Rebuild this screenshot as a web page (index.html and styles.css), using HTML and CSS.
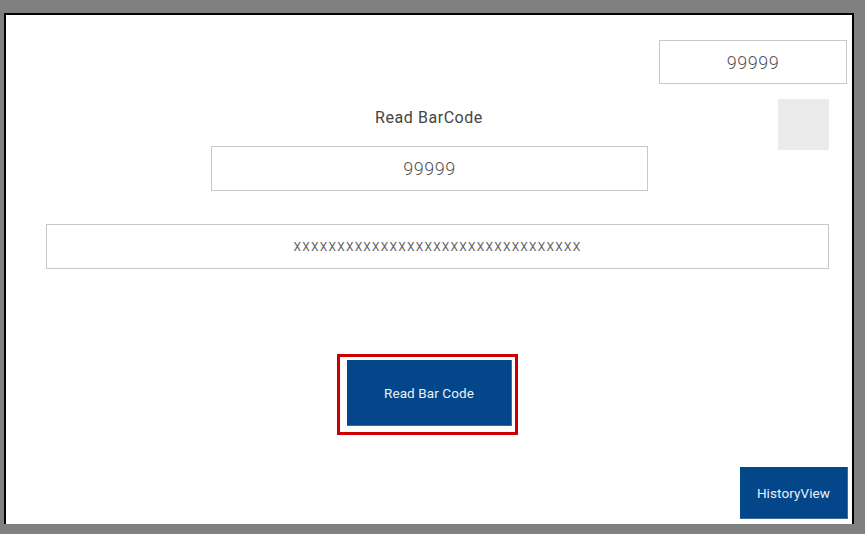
FILE: index.html
```html
<!DOCTYPE html>
<html>
<head>
<meta charset="utf-8">
<link rel="stylesheet" href="styles.css">
</head>
<body>
<div class="panel">
  <div class="top-row">
    <div class="field field-small">99999</div>
  </div>
  <div class="mid-grid">
    <div class="label">Read BarCode</div>
    <div class="square"></div>
    <div class="field field-mid">99999</div>
  </div>
  <div class="field field-wide">XXXXXXXXXXXXXXXXXXXXXXXXXXXXXXXXX</div>
  <div class="focus-ring">
    <button class="btn btn-read">Read Bar Code</button>
  </div>
  <button class="btn btn-history">HistoryView</button>
</div>
</body>
</html>
```
FILE: styles.css
```css
html, body {
  margin: 0;
  padding: 0;
  background: #808080;
  width: 865px;
  height: 534px;
  overflow: hidden;
}
body {
  font-family: Roboto, "Liberation Sans", sans-serif;
}
.panel {
  margin: 13px 0 0 4px;
  width: 846px;
  height: 509px;
  background: #fff;
  border: 2px solid #000;
  border-bottom: none;
  display: flex;
  flex-direction: column;
}
.top-row {
  display: flex;
  justify-content: flex-end;
  padding: 25px 5px 0 0;
}
.field {
  box-sizing: border-box;
  border: 1px solid #c8c8c8;
  background: #fff;
  color: #555;
  display: flex;
  align-items: center;
  justify-content: center;
  font-weight: 300;
}
.field-small {
  width: 188px;
  height: 44px;
  font-size: 18px;
  letter-spacing: 0.5px;
}
.mid-grid {
  margin-top: 15px;
  display: grid;
  grid-template-columns: 1fr 438px 1fr;
  grid-template-rows: 47px 45px;
}
.label {
  grid-column: 2;
  grid-row: 1;
  text-align: center;
  font-size: 16px;
  letter-spacing: 0.55px;
  color: #444;
  padding-top: 9px;
}
.square {
  grid-column: 3;
  grid-row: 1 / span 2;
  justify-self: end;
  align-self: start;
  width: 51px;
  height: 51px;
  margin-right: 23px;
  background: #ebebeb;
}
.field-mid {
  grid-column: 2;
  grid-row: 2;
  font-size: 18px;
  letter-spacing: 0.5px;
  margin-left: 1px;
}
.field-wide {
  margin: 33px 23px 0 40px;
  height: 45px;
  font-size: 12px;
  letter-spacing: 1.2px;
  color: #666;
  font-weight: 400;
}
.focus-ring {
  align-self: flex-start;
  margin: 85px 0 0 331px;
  border: 3px solid #cc0000;
  padding: 3px 3px 6px 7px;
  display: flex;
}
.btn {
  font-family: Roboto, "Liberation Sans", sans-serif;
  background: #03468a;
  color: #eef1f6;
  border: none;
  border-right: 1px solid #3d6a9c;
  border-bottom: 1px solid #3d6a9c;
  margin: 0;
  padding: 0;
  font-size: 13.5px;
  cursor: pointer;
}
.btn-read {
  width: 165px;
  height: 66px;
  letter-spacing: 0.1px;
}
.btn-history {
  align-self: flex-end;
  margin: 32px 4px 0 0;
  width: 108px;
  height: 52px;
  letter-spacing: 0.1px;
}
```
